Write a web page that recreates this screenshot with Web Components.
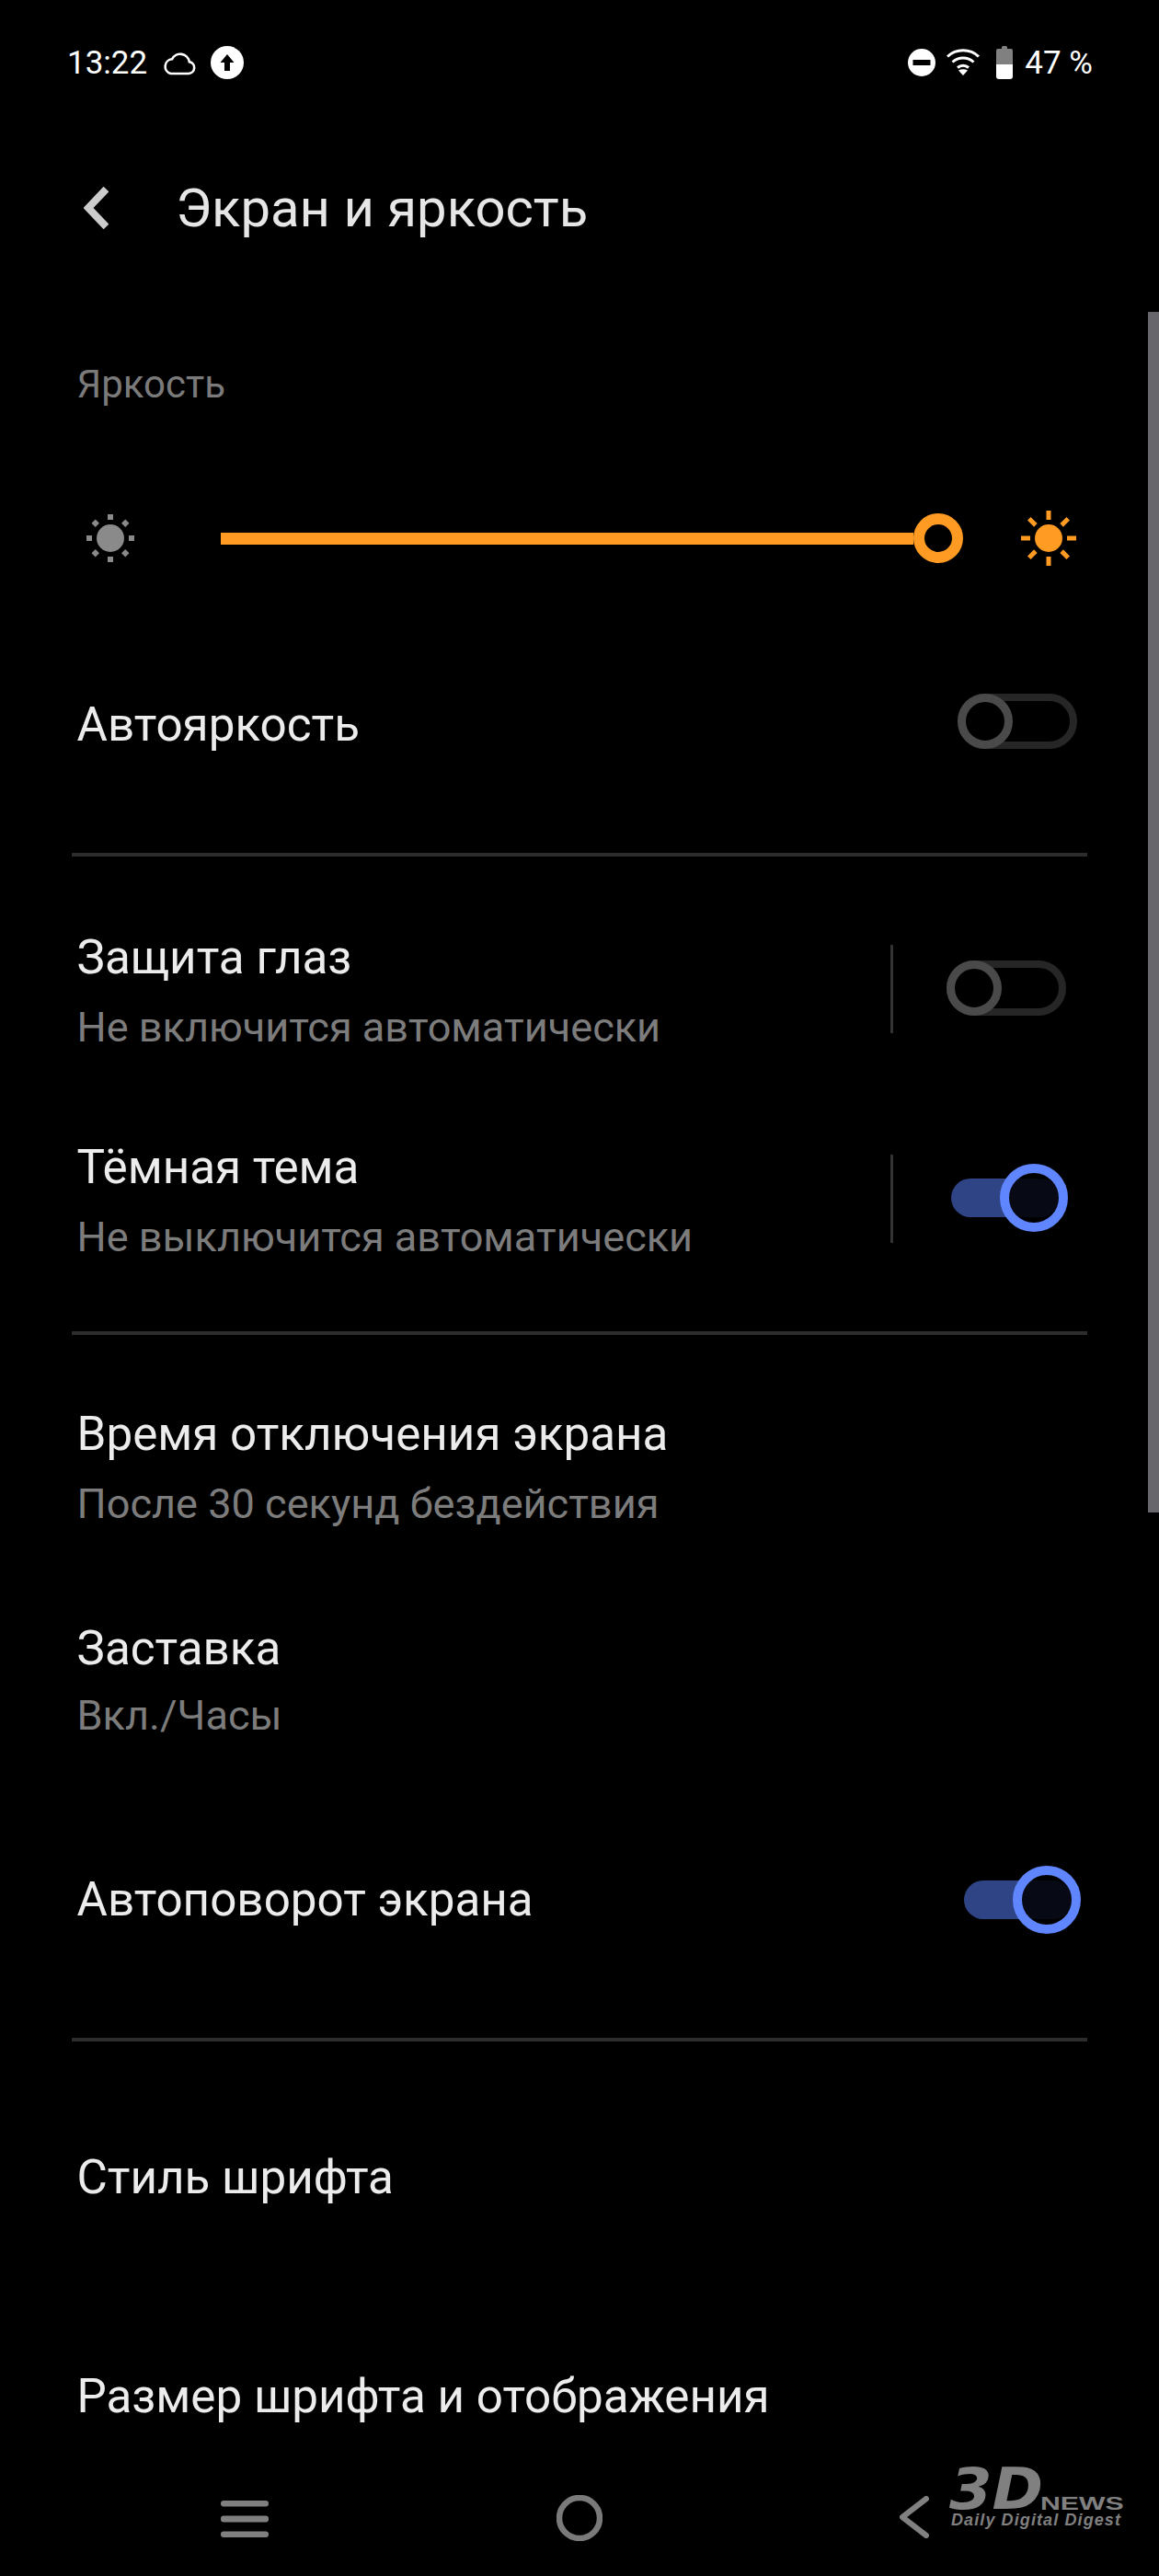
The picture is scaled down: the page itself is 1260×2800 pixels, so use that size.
<!DOCTYPE html>
<html lang="ru">
<head>
<meta charset="utf-8">
<title>Экран и яркость</title>
<style>
  html, body { margin: 0; background: #000; }
  body { width: 1260px; height: 2800px; overflow: hidden; position: relative; font-family: Roboto, "Liberation Sans", sans-serif; }
</style>
</head>
<body>
<status-bar></status-bar>
<app-bar>Экран и яркость</app-bar>
<section-label>Яркость</section-label>
<brightness-slider></brightness-slider>
<setting-row title="Автояркость" h="268" right="89" nudge="4"><toggle-switch lift="-4"></toggle-switch></setting-row>
<list-divider before="7" after="34"></list-divider>
<setting-row title="Защита глаз" sub="Не включится автоматически" h="228" right="101" split="58"><toggle-switch lift="-10"></toggle-switch></setting-row>
<setting-row title="Тёмная тема" sub="Не выключится автоматически" h="228" right="99" split="63"><toggle-switch on lift="-10"></toggle-switch></setting-row>
<list-divider before="26" after="31"></list-divider>
<setting-row title="Время отключения экрана" sub="После 30 секунд бездействия" h="230"></setting-row>
<setting-row title="Заставка" sub="Вкл./Часы" h="230" tight></setting-row>
<setting-row title="Автоповорот экрана" h="246" right="85"><toggle-switch on></toggle-switch></setting-row>
<list-divider before="27" after="29"></list-divider>
<setting-row title="Стиль шрифта" h="238"></setting-row>
<setting-row title="Размер шрифта и отображения" h="238"></setting-row>
<nav-bar></nav-bar>
<scroll-thumb></scroll-thumb>
<news-mark></news-mark>

<script>
class StatusBar extends HTMLElement {
    constructor() {
        super();
        this.attachShadow({ mode: 'open' });
        this.shadowRoot.innerHTML = `
<style>
  :host { display: flex; align-items: center; height: 136px; padding: 0 72px 0 73px; box-sizing: border-box; color: #fff; font-size: 35px; }
  .time { white-space: nowrap; }
  svg { display: block; flex: none; }
  .cloud { margin-left: 17px; }
  .up { margin-left: 16px; }
  .grow { flex: 1; }
  .wifi { margin-left: 12px; }
  .battery { margin-left: 18px; }
  .pct { margin-left: 13px; white-space: nowrap; }
</style>
<span class="time">13:22</span>
<svg class="cloud" width="36" height="28" viewBox="0 0 36 28" fill="none" stroke="#fff" stroke-width="2.600"><path d="M8.500 26h19.500a6.500 6.500 0 0 0 .8-12.900A10 10 0 0 0 10 10.300 8 8 0 0 0 8.500 26z"/></svg>
<svg class="up" width="36" height="36" viewBox="0 0 36 36"><circle cx="18" cy="18" r="18" fill="#fff"/><path d="M18 9l7.500 9H21v9h-6v-9h-4.500z" fill="#000"/></svg>
<span class="grow"></span>
<svg width="30" height="30" viewBox="0 0 30 30"><circle cx="15" cy="15" r="15" fill="#fff"/><rect x="5.500" y="12" width="19" height="6" fill="#000"/></svg>
<svg class="wifi" width="36" height="30" viewBox="0 0 36 30" fill="none" stroke="#fff" stroke-width="3"><path d="M1 8.500C10.500-.5 25.500-.5 35 8.500"/><path d="M6.500 14.500C13 8.500 23 8.500 29.500 14.500"/><path d="M12 20.500c3.500-3 8.500-3 12 0"/><path d="M18 29l-5-5.500c3-1.800 7-1.800 10 0z" fill="#fff" stroke="none"/></svg>
<svg class="battery" width="18" height="36" viewBox="0 0 18 36"><path d="M2 3h4V1.500Q6 0 7.500 0h3Q12 0 12 1.500V3h4q2 0 2 2v15H0V5q0-2 2-2z" fill="#808080"/><path d="M0 20h18v13q0 3-3 3H3q-3 0-3-3z" fill="#fff"/></svg>
<span class="pct">47 %</span>`;
    }
}

class AppBar extends HTMLElement {
    constructor() {
        super();
        this.attachShadow({ mode: 'open' });
        this.shadowRoot.innerHTML = `
<style>
  :host { display: flex; align-items: center; height: 180px; padding-left: 91px; color: #e6e6e6; font-size: 58px; }
  svg { display: block; flex: none; margin-right: 73px; }
</style>
<svg width="27" height="46" viewBox="0 0 27 46" fill="none" stroke="#ccc" stroke-width="8"><path d="M24.500 2.500L5 23l19.500 20.500"/></svg>
<slot></slot>`;
    }
}

class SectionLabel extends HTMLElement {
    constructor() {
        super();
        this.attachShadow({ mode: 'open' });
        this.shadowRoot.innerHTML = `
<style>
  :host { display: flex; align-items: center; height: 202px; padding-left: 83.500px; color: #7a7a7a; font-size: 42px; }
</style>
<slot></slot>`;
    }
}

class BrightnessSlider extends HTMLElement {
    constructor() {
        super();
        this.attachShadow({ mode: 'open' });
        const rays = [0, 45, 90, 135, 180, 225, 270, 315];
        const dots = rays.map((a) => `<rect x="-3" y="-26" width="6" height="6" transform="rotate(${a})"/>`).join('');
        const lines = rays.map((a) => `<rect x="-2.500" y="-30" width="5" height="10" transform="rotate(${a})"/>`).join('');
        this.shadowRoot.innerHTML = `
<style>
  :host { display: flex; align-items: center; height: 134px; padding-left: 92px; }
  svg { display: block; flex: none; }
  .track { width: 753px; height: 13px; margin-left: 92px; background: #ff9a22; flex: none; }
  .knob { width: 54px; height: 54px; border: 12px solid #ff9a22; border-radius: 50%; box-sizing: border-box; flex: none; }
  .sun { margin-left: 63px; }
</style>
<svg width="56" height="56" viewBox="-28 -28 56 56" fill="#8a8a8a"><circle r="15"/>${dots}</svg>
<div class="track"></div>
<div class="knob"></div>
<svg class="sun" width="60" height="60" viewBox="-30 -30 60 60" fill="#ff9a22"><circle r="15"/>${lines}</svg>`;
    }
}

class SettingRow extends HTMLElement {
    constructor() {
        super();
        this.attachShadow({ mode: 'open' });
        const title = this.getAttribute('title');
        const sub = this.getAttribute('sub');
        const split = this.getAttribute('split');
        this.removeAttribute('title');
        this.shadowRoot.innerHTML = `
<style>
  :host { display: flex; align-items: center; box-sizing: border-box; padding-left: 83.500px; color: #ececec; height: ${this.getAttribute('h')}px; padding-right: ${this.getAttribute('right') || 0}px; }
  .text { flex: 1; min-width: 0; padding-top: ${this.getAttribute('nudge') || 0}px; }
  .title { font-size: 51.200px; line-height: 76px; white-space: nowrap; }
  .sub { font-size: 45.100px; line-height: 76px; color: #7c7c7c; white-space: nowrap; }
  :host([tight]) .sub { line-height: 70px; }
  .split { width: 3px; height: 96px; background: #333; margin: -8px ${split}px 0 0; flex: none; }
</style>
<div class="text">
  <div class="title">${title}</div>
  ${sub ? `<div class="sub">${sub}</div>` : ''}
</div>
${split ? '<div class="split"></div>' : ''}
<slot></slot>`;
    }
}

class ToggleSwitch extends HTMLElement {
    constructor() {
        super();
        this.attachShadow({ mode: 'open' });
        this.shadowRoot.innerHTML = `
<style>
  :host { display: block; position: relative; flex: none; width: 130px; height: 60px; margin-top: ${this.getAttribute('lift') || 0}px; }
  :host([on]) { width: 127px; height: 74px; }
  .track { position: absolute; left: 0; right: 0; top: 0; bottom: 0; border: 8px solid #262626; border-radius: 30px; box-sizing: border-box; }
  .knob { position: absolute; left: 0; top: 0; width: 60px; height: 60px; border: 9px solid #4a4a4a; border-radius: 50%; box-sizing: border-box; background: #000; }
  :host([on]) .track { top: 16px; bottom: 16px; right: 9px; border: 0; border-radius: 21px; background: #2f4485; }
  :host([on]) .knob { left: auto; right: 0; width: 74px; height: 74px; border: 10px solid #5f85ff; background: rgba(0,0,0,.85); }
</style>
<div class="track"></div>
<div class="knob"></div>`;
    }
}

class ListDivider extends HTMLElement {
    constructor() {
        super();
        this.attachShadow({ mode: 'open' });
        this.shadowRoot.innerHTML = `
<style>
  :host { display: block; height: 4px; margin: ${this.getAttribute('before')}px 78px ${this.getAttribute('after')}px; background: #2d2d2d; }
</style>`;
    }
}

class NavBar extends HTMLElement {
    constructor() {
        super();
        this.attachShadow({ mode: 'open' });
        this.shadowRoot.innerHTML = `
<style>
  :host { position: absolute; left: 0; right: 0; top: 2670px; height: 130px; background: #000; display: flex; align-items: flex-start; }
  svg { display: block; flex: none; }
  .menu { margin: 48px 0 0 240px; }
  .home { margin: 42px 0 0 313px; }
  .back { margin: 43px 0 0 323px; }
</style>
<svg class="menu" width="52" height="40" viewBox="0 0 52 40" fill="#808080"><rect width="52" height="6.500" rx="3.200"/><rect y="16.500" width="52" height="7" rx="3.200"/><rect y="33.500" width="52" height="6.500" rx="3.200"/></svg>
<svg class="home" width="50" height="50" viewBox="0 0 50 50"><circle cx="25" cy="25" r="22" fill="none" stroke="#7a7a7a" stroke-width="6.500"/></svg>
<svg class="back" width="32" height="46" viewBox="0 0 32 46" fill="none" stroke="#808080" stroke-width="6" stroke-linecap="round" stroke-linejoin="round"><path d="M29 3L3 23l26 20"/></svg>`;
    }
}

class ScrollThumb extends HTMLElement {
    constructor() {
        super();
        this.attachShadow({ mode: 'open' });
        this.shadowRoot.innerHTML = `
<style>
  :host { position: absolute; left: 1248px; top: 339px; width: 12px; height: 1305px; background: #67666c; }
</style>`;
    }
}

class NewsMark extends HTMLElement {
    constructor() {
        super();
        this.attachShadow({ mode: 'open' });
        this.shadowRoot.innerHTML = `
<style>
  :host { position: absolute; left: 1030px; top: 2676px; width: 200px; height: 74px; color: #808080; font-family: "Liberation Sans", sans-serif; font-weight: 700; white-space: nowrap; }
  span { position: absolute; transform-origin: 0 0; line-height: 1; }
  .d3 { left: 2px; top: 7px; font-family: "DejaVu Sans", sans-serif; font-size: 62px; line-height: .75; font-style: italic; transform: scaleX(1.08); }
  .news { left: 101px; top: 34px; font-size: 21px; transform: scaleX(1.44); }
  .tag { left: 4px; top: 54px; font-size: 18px; font-style: italic; letter-spacing: 1.1px; }
</style>
<span class="d3">3D</span>
<span class="news">NEWS</span>
<span class="tag">Daily Digital Digest</span>`;
    }
}

customElements.define('status-bar', StatusBar);
customElements.define('app-bar', AppBar);
customElements.define('section-label', SectionLabel);
customElements.define('brightness-slider', BrightnessSlider);
customElements.define('setting-row', SettingRow);
customElements.define('toggle-switch', ToggleSwitch);
customElements.define('list-divider', ListDivider);
customElements.define('nav-bar', NavBar);
customElements.define('scroll-thumb', ScrollThumb);
customElements.define('news-mark', NewsMark);
</script>
</body>
</html>
